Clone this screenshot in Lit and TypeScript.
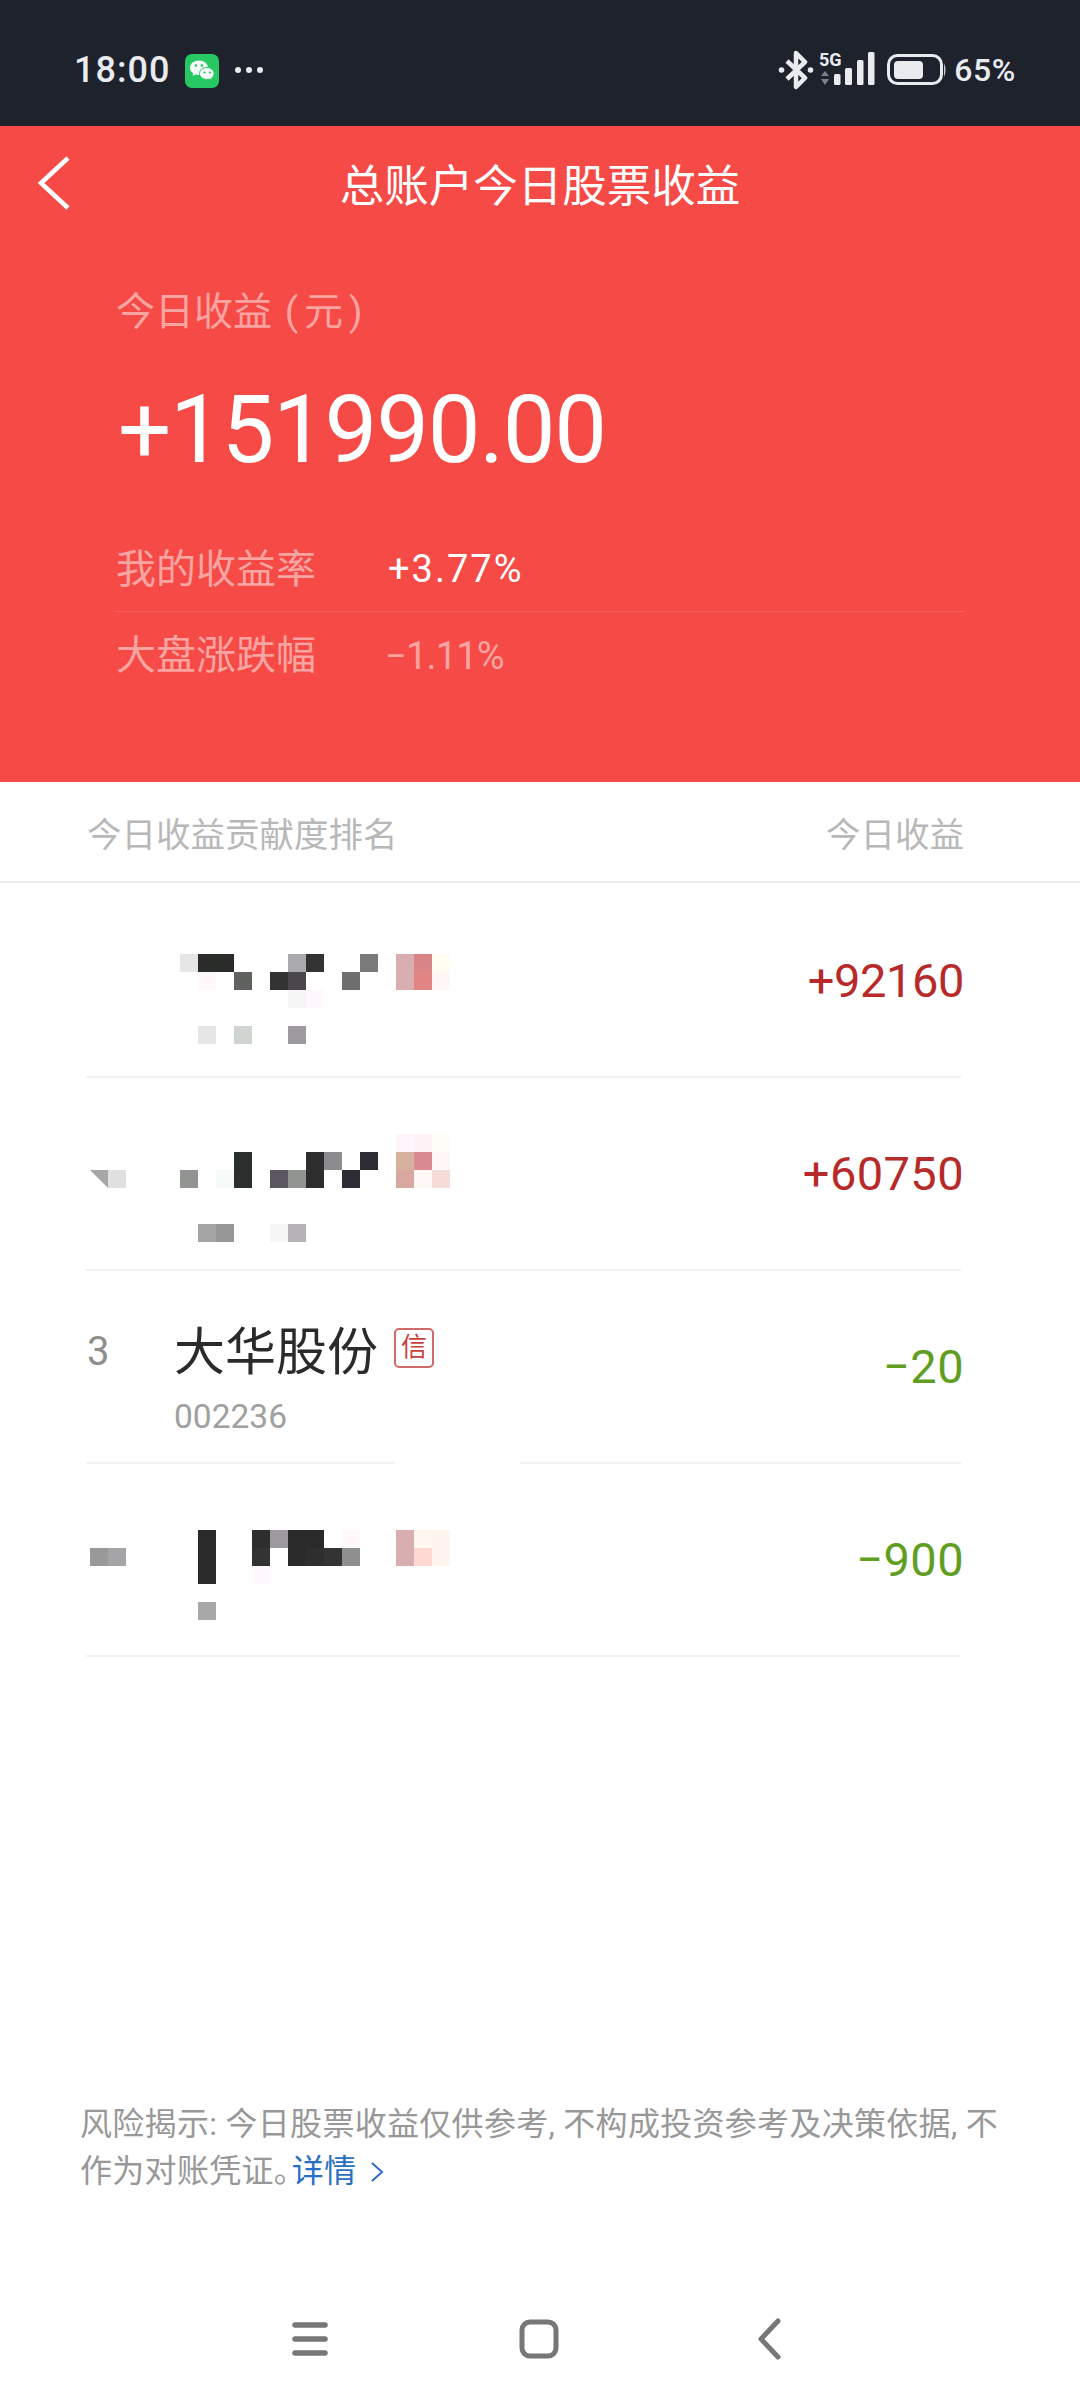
import { LitElement, html, css, svg } from "lit";
import { customElement } from "lit/decorators.js";

type Cell = [number, number, string, boolean?];
interface Row {
  value: string;
  up: boolean;
  top?: number;
  cells?: Cell[];
  gap?: boolean;
  tight?: boolean;
}

const ROWS: Row[] = [
  {
    value: "+92160", up: true, top: 69, tight: true,
    cells: [
      [5,0,"#e6e6e6"],[6,0,"#2a2c2a"],[7,0,"#2a2c2a"],[11,0,"#aaa9ac"],[12,0,"#333333"],[15,0,"#7a7a7c"],[17,0,"#d8aeb0"],[18,0,"#d98486"],[19,0,"#fffcf2"],
      [6,1,"#fff9fe"],[8,1,"#606260"],[10,1,"#333333"],[11,1,"#4a474c"],[14,1,"#6e6e70"],[17,1,"#d8aeb0"],[18,1,"#e08484"],[19,1,"#fff6f6"],
      [11,2,"#f6f6f6"],[12,2,"#fff9ff"],
      [6,4,"#e6e6e6"],[8,4,"#d0d4d0"],[11,4,"#9c9a9e"],
    ],
  },
  {
    value: "+60750", up: true, top: 56,
    cells: [
      [17,0,"#fff5fb"],[18,0,"#fff3f8"],[19,0,"#fffdf5"],
      [8,1,"#2a2e2c"],[12,1,"#2d2d2d"],[13,1,"#8c8c8e"],[15,1,"#2e2c30"],[17,1,"#d8b0a0"],[18,1,"#d98a92"],[19,1,"#fff6f8"],
      [0,2,"#a5a7a5",true],[1,2,"#e0e0e0"],[5,2,"#929492"],[7,2,"#f6fbf7"],[8,2,"#2a2e2c"],[10,2,"#5a5760"],[11,2,"#929492"],[12,2,"#2d2d2d"],[14,2,"#2e2c34"],[17,2,"#d8a8a0"],[18,2,"#fff8f6"],[19,2,"#f6dcd8"],
      [6,5,"#a5a5a5"],[7,5,"#969896"],[10,5,"#f6f6f6"],[11,5,"#b5b3b8"],
    ],
  },
  { value: "\u221220", up: false, gap: true },
  {
    value: "\u2212900", up: false, top: 66,
    cells: [
      [6,0,"#2a2b29"],[9,0,"#2e2e2e"],[10,0,"#9c9a9e"],[11,0,"#2a2a2a"],[12,0,"#2a2a2a"],[14,0,"#fff9fd"],[17,0,"#d8aeb0"],[18,0,"#fff6f0"],[19,0,"#fff5ee"],
      [0,1,"#999999"],[1,1,"#a5a5a7"],[6,1,"#2a2b29"],[9,1,"#333333"],[11,1,"#2a2a2a"],[12,1,"#2e2e2e"],[13,1,"#333333"],[14,1,"#8e908e"],[17,1,"#d8aeb0"],[18,1,"#ffd8d4"],[19,1,"#fff5ee"],
      [6,2,"#2a2b29"],[9,2,"#fff9fd"],
      [6,4,"#a8a8a8"],
    ],
  },
];

@customElement("app-root")
export class AppRoot extends LitElement {
  static styles = css`
    :host {
      display: block;
      width: 1080px;
      height: 2400px;
      background: #fff;
      font-family: Roboto, "Noto Sans CJK SC", sans-serif;
      overflow: hidden;
    }
    * { box-sizing: border-box; }
    svg { display: block; flex: none; }

    .status {
      height: 126px;
      background: #1e222d;
      display: flex;
      align-items: center;
      justify-content: space-between;
      padding: 14px 64px 0 74px;
      color: #e9ebef;
    }
    .side { display: flex; align-items: center; }
    .time { font-size: 36px; font-weight: 500; letter-spacing: 1px; line-height: 40px; margin-top: -1px; }
    .wechat { margin-left: 15px; margin-top: 1px; }
    .more { margin-left: 15px; }
    .pct { font-size: 32px; line-height: 40px; letter-spacing: 0.6px; margin-left: 6px; font-weight: 500; }
    .sig { margin-left: 4px; }
    .batt { margin-left: 10px; }

    .hero { height: 656px; background: #f54a46; color: #fff; }
    .bar {
      height: 112px;
      display: flex;
      align-items: center;
      justify-content: center;
      position: relative;
      font-size: 44.5px;
    }
    .back { position: absolute; left: 36px; top: 29px; }
    .hero-label {
      margin: 49px 0 0 116px;
      font-size: 39px;
      line-height: 50px;
      color: rgba(255, 255, 255, 0.5);
    }
    .paren { margin-left: 3px; letter-spacing: 6px; }
    .big {
      margin: 38px 0 0 118px;
      font-size: 94px;
      line-height: 110px;
      letter-spacing: -1.3px;
    }
    .stats { margin: 42px 116px 0 117px; }
    .stat { display: flex; align-items: center; height: 84px; }
    .stat + .stat { border-top: 1px solid #f9615d; height: 87px; margin-left: -2px; padding-left: 2px; }
    .stat-label { width: 271px; font-size: 40px; line-height: 50px; margin: 2px 0 0 -1px; color: rgba(255, 255, 255, 0.5); }
    .stat-val { font-size: 38px; letter-spacing: 2px; margin-left: 1px; }
    .stat-val.dim { color: rgba(255, 255, 255, 0.5); letter-spacing: -0.8px; margin: 2px 0 0 -2px; }

    .head {
      height: 101px;
      border-bottom: 2px solid #ececec;
      display: flex;
      align-items: center;
      justify-content: space-between;
      padding: 0 116px 0 87px;
      font-size: 34.5px;
      color: #b8b8b8;
    }

    .list { padding: 2px 116px 0 86px; }
    .row { height: 191px; display: flex; justify-content: space-between; }
    .mosaic {
      display: grid;
      grid-template-columns: repeat(20, 18px);
      grid-auto-rows: 18px;
      margin-left: 4px;
      align-self: flex-start;
    }
    .tri { clip-path: polygon(0 0, 100% 0, 100% 100%); }
    .stock { display: grid; grid-template-columns: 88px auto; align-self: flex-start; padding-top: 52px; }
    .rank { font-size: 40px; line-height: 60px; color: #8e8e8e; margin-left: 1px; margin-top: -1px; }
    .name { display: flex; align-items: center; font-size: 51px; line-height: 60px; color: #2a2a2a; }
    .tag {
      width: 40px;
      height: 40px;
      margin: -10px 0 0 16px;
      border: 2px solid #cf6a6a;
      border-radius: 5px;
      font-size: 26px;
      line-height: 34px;
      text-align: center;
      color: #c9413f;
    }
    .code { font-size: 33.5px; line-height: 40px; margin-top: 14px; color: #a0a0a0; }
    .val { align-self: center; font-size: 47px; letter-spacing: 0.4px; line-height: 60px; }
    .val.tight { letter-spacing: -0.4px; }
    .val.up { color: #b72a2a; }
    .val.down { color: #609e22; }
    .rule { height: 2px; display: flex; justify-content: space-between; margin-right: 3px; }
    .rule i { flex: 1; background: #f1f1f1; }
    .rule i + i { flex: none; width: 441px; margin-left: 125px; }

    .notice {
      margin: 444px 0 0 80px;
      font-size: 32px;
      letter-spacing: 0.3px;
      line-height: 47px;
      color: #989898;
      white-space: nowrap;
    }
    .line { display: flex; align-items: center; }
    .stop { letter-spacing: -14px; }
    .link { color: #2a6fc4; }
    .chev { margin-left: 14px; }

    .nav {
      margin-top: 123px;
      display: flex;
      align-items: center;
      padding-left: 291px;
      gap: 190px;
    }
  `;

  private statusIcons() {
    return html`
      <svg width="36" height="40" viewBox="0 0 36 40">
        <path d="M9 11 L27 28 L18 37 V3 L27 12 L9 29" fill="none" stroke="#e9ebef" stroke-width="4.500" stroke-linejoin="round"/>
        <circle cx="3.500" cy="20" r="2.800" fill="#e9ebef"/><circle cx="32.500" cy="20" r="2.800" fill="#e9ebef"/>
      </svg>
      <svg class="sig" width="58" height="36" viewBox="0 0 58 36">
        <text x="1" y="14" font-family="Roboto" font-weight="700" font-size="18" fill="#e9ebef">5G</text>
        <path d="M7 19 L11 24 H3 Z M3 27 H11 L7 33 Z" fill="#7d818b"/>
        ${svg`
          <rect x="16" y="22" width="6.500" height="11" rx="1.500" fill="#e9ebef"/>
          <rect x="27" y="16" width="7" height="17" rx="1.500" fill="#e9ebef"/>
          <rect x="39" y="8" width="6.500" height="25" rx="1.500" fill="#e9ebef"/>
          <rect x="50" y="0" width="6.500" height="33" rx="1.500" fill="#e9ebef"/>`}
      </svg>
      <svg class="batt" width="62" height="32" viewBox="0 0 62 32">
        <rect x="2.500" y="1.500" width="53" height="28" rx="9" fill="none" stroke="#e9ebef" stroke-width="3"/>
        <rect x="8" y="7" width="29" height="18" rx="4" fill="#e9ebef"/>
        <path d="M58 9 Q61 16 58 23 Z" fill="#c9ccd3"/>
      </svg>
    `;
  }

  private renderRow(r: Row) {
    const left = r.cells
      ? html`<div class="mosaic" style="margin-top:${r.top}px">
          ${r.cells.map(
            ([c, y, col, tri]) =>
              html`<div class=${tri ? "tri" : ""} style="grid-column:${c + 1};grid-row:${y + 1};background:${col}"></div>`
          )}
        </div>`
      : html`<div class="stock">
          <div class="rank">3</div>
          <div class="name">大华股份<span class="tag">信</span></div>
          <div></div>
          <div class="code">002236</div>
        </div>`;
    return html`
      <div class="row">
        ${left}
        <div class="val ${r.up ? "up" : "down"} ${r.tight ? "tight" : ""}">${r.value}</div>
      </div>
      <div class="rule">${r.gap ? html`<i></i><i></i>` : html`<i></i>`}</div>
    `;
  }

  render() {
    return html`
      <div class="status">
        <div class="side">
          <span class="time">18:00</span>
          <svg class="wechat" width="34" height="34" viewBox="0 0 34 34">
            <rect width="34" height="34" rx="7" fill="#27c763"/>
            <path d="M14 6.500c-5 0-9 3.100-9 7.200 0 2.300 1.300 4.300 3.300 5.600l-.8 2.700 3-1.600c1.100.3 2.300.5 3.500.5 5 0 9-3.200 9-7.200s-4-7.200-9-7.200z" fill="#f4fbf6"/>
            <path d="M22 13.500c-4.300 0-7.500 2.700-7.500 6s3.200 6 7.500 6c.9 0 1.800-.1 2.600-.4l2.400 1.300-.6-2.200c1.700-1.100 2.700-2.800 2.700-4.700 0-3.300-3.300-6-7.100-6z" fill="#f4fbf6" stroke="#27c763" stroke-width="1"/>
            <circle cx="11" cy="11.500" r="1.300" fill="#27c763"/><circle cx="17" cy="11.500" r="1.300" fill="#27c763"/>
            <circle cx="19.500" cy="18.500" r="1.100" fill="#27c763"/><circle cx="25" cy="18.500" r="1.100" fill="#27c763"/>
          </svg>
          <svg class="more" width="30" height="8" viewBox="0 0 30 8">
            <circle cx="4" cy="4" r="3" fill="#e9ebef"/><circle cx="15" cy="4" r="3" fill="#e9ebef"/><circle cx="26" cy="4" r="3" fill="#e9ebef"/>
          </svg>
        </div>
        <div class="side">
          ${this.statusIcons()}
          <span class="pct">65%</span>
        </div>
      </div>

      <div class="hero">
        <div class="bar">
          <svg class="back" width="36" height="56" viewBox="0 0 36 56">
            <path d="M32 3 L5 28 L32 53" fill="none" stroke="#fff" stroke-width="4.500"/>
          </svg>
          总账户今日股票收益
        </div>
        <div class="hero-label">今日收益 <span class="paren">(元)</span></div>
        <div class="big">+151990.00</div>
        <div class="stats">
          <div class="stat"><span class="stat-label">我的收益率</span><span class="stat-val">+3.77%</span></div>
          <div class="stat"><span class="stat-label">大盘涨跌幅</span><span class="stat-val dim">\u22121.11%</span></div>
        </div>
      </div>

      <div class="head"><span>今日收益贡献度排名</span><span>今日收益</span></div>
      <div class="list">${ROWS.map((r) => this.renderRow(r))}</div>

      <div class="notice">
        <div class="line">风险揭示: 今日股票收益仅供参考, 不构成投资参考及决策依据, 不</div>
        <div class="line">
          <span>作为对账凭证</span><span class="stop">。</span><span class="link">详情</span>
          <svg class="chev" width="14" height="20" viewBox="0 0 14 20"><path d="M2 1 L12 10 L2 19" fill="none" stroke="#2a6fc4" stroke-width="2"/></svg>
        </div>
      </div>

      <div class="nav">
        <svg width="38" height="36" viewBox="0 0 38 36">
          <path d="M4 4 H34 M4 18 H34 M4 32 H34" stroke="#777" stroke-width="5.500" stroke-linecap="round"/>
        </svg>
        <svg width="40" height="40" viewBox="0 0 40 40">
          <rect x="3" y="3" width="34" height="34" rx="8" fill="none" stroke="#777" stroke-width="5"/>
        </svg>
        <svg width="26" height="42" viewBox="0 0 26 42" style="margin-left:7px">
          <path d="M22 3 L5 21 L22 39" fill="none" stroke="#777" stroke-width="5" stroke-linecap="round" stroke-linejoin="round"/>
        </svg>
      </div>
    `;
  }
}
